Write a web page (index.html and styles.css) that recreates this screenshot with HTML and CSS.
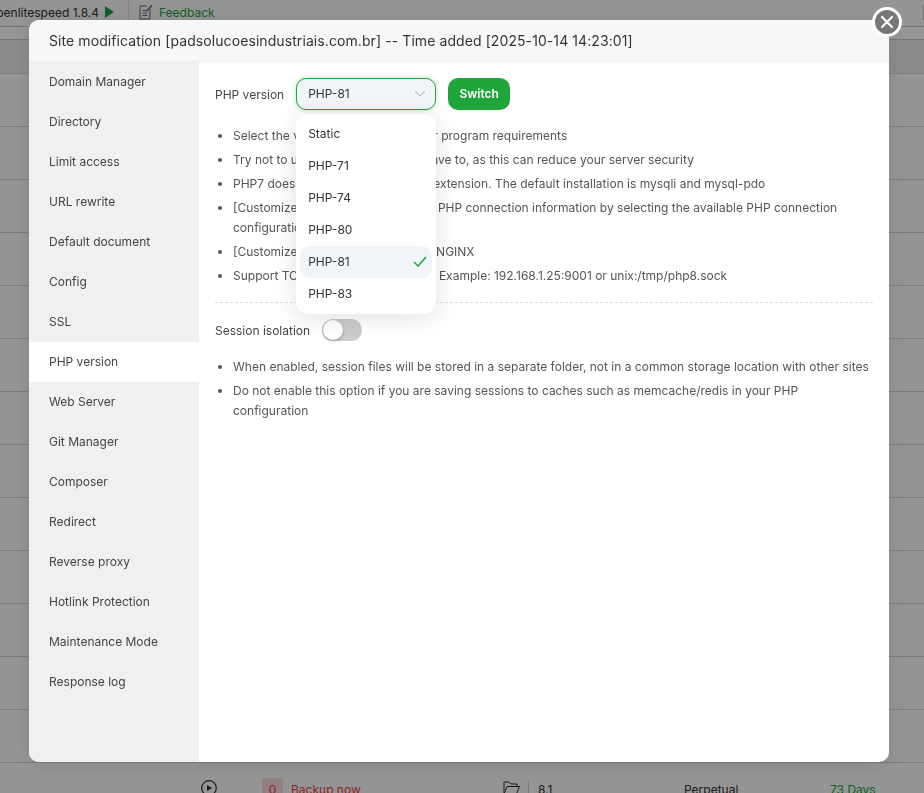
FILE: index.html
```html
<!DOCTYPE html>
<html lang="en">
<head>
<meta charset="utf-8">
<title>Site modification</title>
<link rel="stylesheet" href="styles.css">
</head>
<body>
<div class="page">
  <div class="topbar">
    <div class="top-left">
      <span class="ols">openlitespeed 1.8.4</span>
      <svg class="play" width="9" height="12" viewBox="0 0 9 12"><path d="M0 0L9 6L0 12Z" fill="#20a53a"/></svg>
    </div>
    <div class="top-right">
      <svg width="14" height="16" viewBox="0 0 14 16" fill="none" stroke="#666" stroke-width="1"><path d="M11 5V15H1V2H8"/><path d="M3.5 6.5H8.5M3.5 9H8.5M3.5 11.5H8.5"/><path d="M8 7L13 1" stroke-width="1.4"/></svg>
      <span class="feedback">Feedback</span>
      <span class="top-edge"></span>
    </div>
  </div>
  <div class="spacer"></div>
  <div class="thead"></div>
  <div class="rows">
    <div class="row"></div><div class="row"></div><div class="row"></div><div class="row"></div>
    <div class="row"></div><div class="row"></div><div class="row"></div><div class="row"></div>
    <div class="row"></div><div class="row"></div><div class="row"></div><div class="row"></div>
    <div class="row last"></div>
  </div>
  <div class="site-row">
    <svg class="c-play" width="16" height="16" viewBox="0 0 16 16" fill="none"><circle cx="8" cy="8" r="7.3" stroke="#333" stroke-width="1.2"/><path d="M6 5L11 8L6 11Z" fill="#333"/></svg>
    <span class="badge">0</span>
    <span class="backup">Backup now</span>
    <svg class="c-folder" width="17" height="14" viewBox="0 0 17 14" fill="none" stroke="#333" stroke-width="1"><path d="M1 13V1H6L8 3H14V5.5"/><path d="M1 13L4 5.5H16.5L13.5 13Z"/></svg>
    <span class="ver">8.1</span>
    <span class="perp">Perpetual</span>
    <span class="days">73 Days</span>
  </div>
</div>

<div class="overlay">
  <div class="modal">
    <button class="close" type="button" aria-label="Close">
      <svg width="14" height="14" viewBox="0 0 14 14"><path d="M2 2L12 12M12 2L2 12" stroke="#fff" stroke-width="2.2" stroke-linecap="round"/></svg>
    </button>
    <header class="modal-title">Site modification [padsolucoesindustriais.com.br] -- Time added [2025-10-14 14:23:01]</header>
    <div class="modal-body">
      <nav class="side">
        <a class="side-item">Domain Manager</a>
        <a class="side-item">Directory</a>
        <a class="side-item">Limit access</a>
        <a class="side-item">URL rewrite</a>
        <a class="side-item">Default document</a>
        <a class="side-item">Config</a>
        <a class="side-item">SSL</a>
        <a class="side-item active">PHP version</a>
        <a class="side-item">Web Server</a>
        <a class="side-item">Git Manager</a>
        <a class="side-item">Composer</a>
        <a class="side-item">Redirect</a>
        <a class="side-item">Reverse proxy</a>
        <a class="side-item">Hotlink Protection</a>
        <a class="side-item">Maintenance Mode</a>
        <a class="side-item">Response log</a>
      </nav>
      <main class="content">
        <div class="version-row">
          <span class="label">PHP version</span>
          <div class="select-wrap">
            <div class="select">
              <span>PHP-81</span>
              <svg width="12" height="7" viewBox="0 0 12 7" fill="none"><path d="M1 1L6 6L11 1" stroke="#c0c4cc" stroke-width="1.2"/></svg>
            </div>
            <div class="menu">
              <div class="opt">Static</div>
              <div class="opt">PHP-71</div>
              <div class="opt">PHP-74</div>
              <div class="opt">PHP-80</div>
              <div class="opt selected"><span>PHP-81</span>
                <svg width="14" height="11" viewBox="0 0 14 11" fill="none"><path d="M1 6L5 10L13 1" stroke="#20a53a" stroke-width="1.5"/></svg>
              </div>
              <div class="opt">PHP-83</div>
            </div>
          </div>
          <button class="switch" type="button">Switch</button>
        </div>
        <ul class="notes">
          <li>Select the version according to your program requirements</li>
          <li>Try not to use PHP5.2 unless you have to, as this can reduce your server security</li>
          <li>PHP7 does not support the 'mysql' extension. The default installation is mysqli and mysql-pdo</li>
          <li>[Customize PHP version] Select the PHP connection information by selecting the available PHP connection configuration</li>
          <li>[Customize PHP version] Supports: NGINX</li>
          <li>Support TCP or UNIX configuration. Example: 192.168.1.25:9001 or unix:/tmp/php8.sock</li>
        </ul>
        <div class="divider"></div>
        <div class="session-row">
          <span class="label">Session isolation</span>
          <span class="toggle"><span class="knob"></span></span>
        </div>
        <ul class="notes">
          <li>When enabled, session files will be stored in a separate folder, not in a common storage location with other sites</li>
          <li>Do not enable this option if you are saving sessions to caches such as memcache/redis in your PHP configuration</li>
        </ul>
      </main>
    </div>
  </div>
</div>
</body>
</html>
```
FILE: styles.css
```css
* { box-sizing: border-box; }
html, body { margin: 0; height: 100%; }
body {
  width: 924px;
  height: 793px;
  overflow: hidden;
  background: #fff;
  font-family: Inter, "Noto Sans", sans-serif;
  font-size: 12px;
  color: #333;
}
.page { height: 793px; overflow: hidden; }

.topbar { display: flex; height: 27px; border-bottom: 1px solid #ccc; }
.top-left {
  display: flex; align-items: center; width: 129px; padding-bottom: 2px;
  border-right: 1px solid #ddd; white-space: nowrap; overflow: hidden;
}
.ols { margin-left: -11px; color: #333; }
.play { margin-left: 6px; flex: none; }
.top-right { flex: 1; display: flex; align-items: center; gap: 6px; padding: 0 0 2px 10px; }
.feedback { color: #20a53a; }
.top-edge { margin-left: auto; width: 1px; height: 15px; background: #ccc; }
.spacer { height: 13px; border-bottom: 1px solid #ccc; }
.thead { height: 34px; background: #f0f0f0; border-bottom: 1px solid #ddd; }
.row { height: 53px; border-bottom: 1px solid #d6d6d6; }
.rows { height: 689px; }

.site-row { position: relative; height: 30px; display: flex; align-items: flex-start; }
.c-play { margin: 17px 0 0 201px; flex: none; }
.badge {
  margin: 15px 0 0 45px; width: 21px; height: 24px; flex: none;
  background: #fbdcdc; color: #ef4444; text-align: center; line-height: 24px; border-radius: 2px;
}
.backup { margin: 19px 0 0 8px; color: #ef4444; width: 212px; flex: none; }
.c-folder { margin: 18px 0 0 0; flex: none; }
.ver { margin: 18px 0 0 8px; padding: 1px 0 0 9px; border-left: 1px solid #ccc; width: 156px; flex: none; color: #333; }
.perp { margin-top: 19px; width: 146px; flex: none; }
.days { margin-top: 19px; color: #20a53a; }

.overlay {
  position: fixed; inset: 0;
  background: rgba(0, 0, 0, .42);
  padding: 20px 35px 31px 29px;
  display: flex;
}
.modal {
  position: relative; flex: 1;
  display: flex; flex-direction: column;
  background: #fff; border-radius: 10px;
  box-shadow: 0 2px 20px rgba(0, 0, 0, .1);
}
.close {
  position: absolute; right: -13px; top: -13px;
  width: 30px; height: 30px; padding: 0;
  display: flex; align-items: center; justify-content: center;
  border: 3px solid #fff; border-radius: 50%; background: #777;
}
.modal-title {
  height: 42px; flex: none; padding: 0 20px;
  display: flex; align-items: center;
  background: #f6f8f8; border-bottom: 1px solid #eee;
  border-radius: 10px 10px 0 0;
  font-size: 14px; letter-spacing: .085px; font-weight: 400; color: #333; white-space: nowrap;
}
.modal-body { flex: 1; display: flex; min-height: 0; }
.side { width: 170px; flex: none; background: #f0f0f0; border-bottom-left-radius: 10px; }
.side-item {
  display: block; height: 40px; line-height: 40px; padding-left: 20px;
  color: #444;
}
.side-item.active { background: #fff; }
.content { flex: 1; padding: 16px 16px 0; color: #333; }
.version-row { display: flex; align-items: center; height: 32px; }
.label { color: #444; }
.select-wrap { position: relative; margin-left: 12px; width: 140px; }
.select {
  height: 32px; padding: 0 9px 2px 11px;
  display: flex; align-items: center; justify-content: space-between;
  background: #f1f5f9; border: 1px solid #20a53a; border-radius: 10px;
  box-shadow: 0 0 5px rgba(32, 165, 58, .35);
  color: #333;
}
.menu {
  position: absolute; left: 0; top: 36px; width: 140px; z-index: 2;
  padding: 4px; background: #fff; border-radius: 12px;
  box-shadow: 0 4px 24px rgba(0, 0, 0, .12);
}
.opt {
  height: 32px; padding: 0 5px 2px 8px; display: flex; align-items: center; justify-content: space-between;
  color: #333; border-radius: 10px;
}
.opt.selected { background: #f1f5f9; }
.switch {
  margin-left: 12px; width: 62px; height: 32px; padding: 0 0 2px;
  background: #20a53a; border: 0; border-radius: 10px;
  color: #fff; font: 600 12px Inter, "Noto Sans", sans-serif;
}
.notes { margin: 0; padding: 0 0 0 18px; color: #555; }
.version-row + .notes { margin-top: 16px; }
.notes li { line-height: 20px; margin-bottom: 4px; }
.divider { margin-top: 16px; border-top: 1px dashed #ddd; }
.session-row { display: flex; align-items: center; height: 22px; margin-top: 16px; margin-bottom: 16px; }
.toggle {
  display: block; position: relative; margin-left: 12px; width: 40px; height: 22px;
  background: #ccc; border-radius: 11px;
}
.knob {
  position: absolute; left: 1px; top: 1px; width: 20px; height: 20px;
  background: #fff; border-radius: 50%; box-shadow: 0 1px 3px rgba(0, 0, 0, .3);
}
```
